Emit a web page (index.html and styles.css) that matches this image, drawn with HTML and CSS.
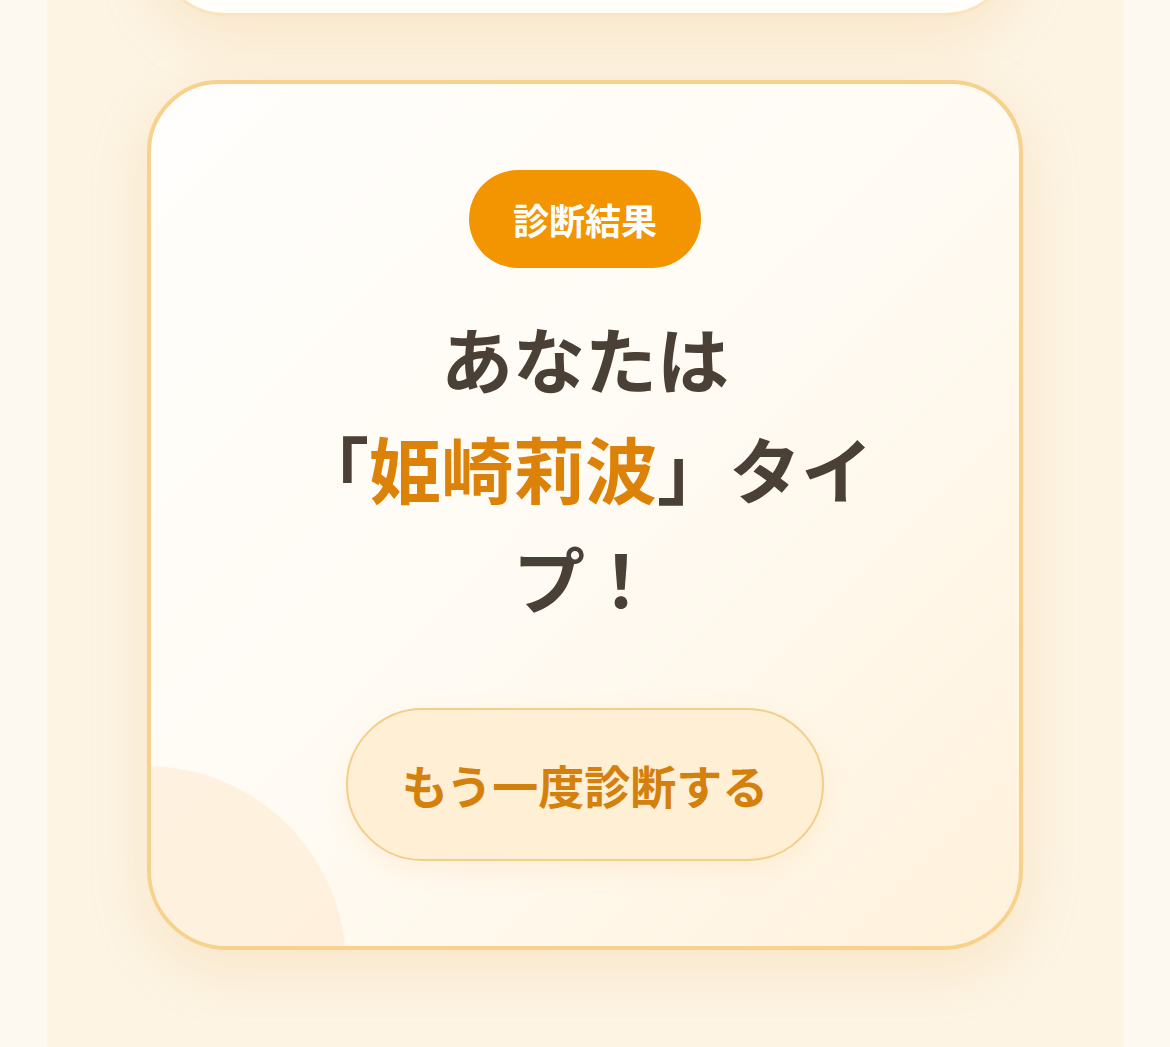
FILE: index.html
```html
<!DOCTYPE html>
<html lang="ja">
<head>
<meta charset="utf-8">
<title>診断結果</title>
<link rel="stylesheet" href="styles.css">
</head>
<body>
<main class="page">
  <section class="card card-prev"></section>

  <section class="card result">
    <span class="result-deco"></span>
    <div class="result-body">
      <span class="badge">診断結果</span>
      <h1 class="result-title">あなたは<span class="name-quote">「<span class="name">姫崎莉波</span>」</span>タイプ！</h1>
      <button class="retry" type="button">もう一度診断する</button>
    </div>
  </section>
</main>
</body>
</html>
```
FILE: styles.css
```css
* {
  box-sizing: border-box;
}

html, body {
  margin: 0;
  padding: 0;
}

body {
  background: #fdf9f1;
  font-family: "Noto Sans CJK JP", "Noto Sans", sans-serif;
  color: #4a4036;
}

.page {
  width: 1076px;
  min-height: 1047px;
  margin: 0 auto;
  background: #fdf4e4;
  display: flex;
  flex-direction: column;
  align-items: center;
  gap: 64px;
  overflow: hidden;
  padding-bottom: 96px;
}

.card {
  position: relative;
  border-radius: 72px;
  box-shadow: 0 18px 60px rgba(232, 168, 80, 0.2);
}

/* the card above, scrolled mostly out of view */
.card-prev {
  width: 862px;
  height: 300px;
  margin-top: -284px;
  background: #fffefb;
  border: 3px solid #fbe4bd;
}

.result {
  width: 876px;
  border: 4px solid #f7d28c;
  background: linear-gradient(135deg, #fffefc 0%, #fffbf4 50%, #fff2dc 100%);
  overflow: hidden;
  border-radius: 72px 72px 80px 80px;
}

.result-deco {
  position: absolute;
  left: -205px;
  bottom: -220px;
  width: 400px;
  height: 400px;
  border-radius: 50%;
  background: rgba(253, 234, 204, 0.55);
}

.result-body {
  position: relative;
  z-index: 1;
  display: flex;
  flex-direction: column;
  align-items: center;
  padding: 86px 0 85px;
}

.badge {
  display: inline-block;
  background: #f29500;
  color: #ffffff;
  font-size: 36px;
  font-weight: 700;
  line-height: 54px;
  padding: 22px 44px;
  border-radius: 49px;
}

.result-title {
  width: 620px;
  margin: 34px 0 0;
  font-size: 72px;
  font-weight: 700;
  line-height: 110px;
  text-align: center;
  color: #4a4036;
  text-spacing-trim: space-all;
}

.name-quote {
  white-space: nowrap;
}

.name {
  color: #dc8208;
}

.retry {
  margin-top: 76px;
  font-family: inherit;
  font-size: 46px;
  font-weight: 700;
  line-height: 69px;
  color: #d4800c;
  background: #ffefd4;
  border: 2px solid #f3ce8a;
  border-radius: 80px;
  padding: 40px 54px;
  box-shadow: 0 8px 26px rgba(240, 170, 70, 0.12);
  cursor: pointer;
}
```
